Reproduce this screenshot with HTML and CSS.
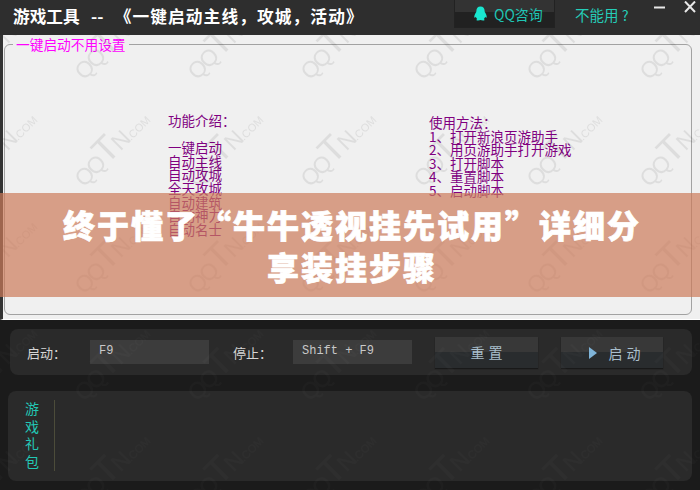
FILE: index.html
```html
<!DOCTYPE html>
<html lang="zh-CN">
<head>
    <meta charset="UTF-8">
    <meta name="viewport" content="width=device-width, initial-scale=1.0">
    <title>游戏工具</title>
    <link rel="stylesheet" href="styles.css">
</head>
<body>
    <header class="titlebar">
        <div class="app-title">游戏工具 -- <span class="title-sub">《一键启动主线，攻城，活动》</span></div>
        <div class="qq-btn">
            <svg class="qq-icon" viewBox="0 0 16 16"><path d="M8 0.5C5 0.5 3.6 2.8 3.6 5.2C3.6 6 3.4 6.4 2.9 7.3C2 8.8 1 11 1.5 12.3C1.9 12.8 2.6 11.9 3 11.4C3.3 12.4 3.8 13.2 4.4 13.8C3.4 14.2 3.2 15.5 5.4 15.5C6.6 15.5 7.4 15.1 8 15C8.6 15.1 9.4 15.5 10.6 15.5C12.8 15.5 12.6 14.2 11.6 13.8C12.2 13.2 12.7 12.4 13 11.4C13.4 11.9 14.1 12.8 14.5 12.3C15 11 14 8.8 13.1 7.3C12.6 6.4 12.4 6 12.4 5.2C12.4 2.8 11 0.5 8 0.5Z"/></svg>
            <span>QQ咨询</span>
        </div>
        <div class="help-link">不能用 ?</div>
        <div class="win-btns">
            <svg class="win-icon" viewBox="0 0 12 12"><path d="M0 6.5H11"/></svg>
            <svg class="win-icon" viewBox="0 0 12 12"><path d="M1 0.5L11 11M11 0.5L1 11"/></svg>
        </div>
    </header>

    <main class="work">
        <fieldset class="settings">
            <legend>一键启动不用设置</legend>
            <div class="info-cols">
                <div class="info-list">
                    <div>功能介绍：</div>
                    <div>&nbsp;</div>
                    <div>一键启动</div>
                    <div>自动主线</div>
                    <div>自动攻城</div>
                    <div>全天攻城</div>
                    <div>自动建筑</div>
                    <div>自动神力</div>
                    <div>自动名士</div>
                </div>
                <div class="info-list usage">
                    <div>使用方法：</div>
                    <div>1、打开新浪页游助手</div>
                    <div>2、用页游助手打开游戏</div>
                    <div>3、打开脚本</div>
                    <div>4、重置脚本</div>
                    <div>5、启动脚本</div>
                </div>
            </div>
        </fieldset>
        <svg class="watermark" width="700" height="285">
            <defs>
                <pattern id="qqtnLight" width="113" height="107" patternUnits="userSpaceOnUse" patternTransform="translate(63 53)">
                    <text class="mark-text" transform="translate(18 100) rotate(-45)">QQ<tspan class="mark-t">T</tspan>N<tspan class="mark-com">.COM</tspan></text>
                </pattern>
            </defs>
            <rect width="700" height="285" fill="url(#qqtnLight)"/>
        </svg>
    </main>

    <section class="lower">
        <div class="controls">
            <label class="key-label">启动：</label>
            <div class="key-input">F9</div>
            <label class="key-label stop">停止：</label>
            <div class="key-input">Shift + F9</div>
            <button class="tool-btn reset">重 置</button>
            <button class="tool-btn start">
                <svg class="play-icon" viewBox="0 0 8 12"><path d="M0 0L8 6L0 12Z"/></svg>
                启 动
            </button>
        </div>
        <div class="gift">
            <div class="gift-title">游<br>戏<br>礼<br>包</div>
            <div class="gift-line"></div>
        </div>
        <svg class="watermark" width="700" height="170">
            <defs>
                <pattern id="qqtnDark" width="113" height="107" patternUnits="userSpaceOnUse" patternTransform="translate(66 -18)">
                    <text class="mark-text dark" transform="translate(18 100) rotate(-45)">QQ<tspan class="mark-t">T</tspan>N<tspan class="mark-com">.COM</tspan></text>
                </pattern>
            </defs>
            <rect width="700" height="170" fill="url(#qqtnDark)"/>
        </svg>
    </section>

    <div class="banner">终于懂了“牛牛透视挂先试用”详细分享装挂步骤</div>
</body>
</html>
```

FILE: styles.css
```css
body {
    margin: 0;
    width: 700px;
    height: 490px;
    overflow: hidden;
    position: relative;
    background-color: #1b1b1b;
    font-family: "Noto Sans CJK SC", sans-serif;
}

/* title bar */
.titlebar {
    display: flex;
    height: 35px;
    background-color: #2e2e2e;
    color: white;
}

.app-title {
    width: 441px;
    padding-left: 13px;
    line-height: 33px;
    font-size: 16.7px;
    font-weight: bold;
    white-space: pre;
    word-spacing: 7.5px;
}

.title-sub {
    letter-spacing: 1.1px;
}

.qq-btn {
    display: flex;
    align-items: center;
    gap: 6px;
    box-sizing: border-box;
    width: 101px;
    height: 28px;
    padding-left: 18px;
    background: linear-gradient(#333 0 45%, #212121 45%);
    border: 1px solid #222;
    border-top: none;
    color: #1fc4b4;
    font-size: 14px;
}

.qq-icon {
    width: 15px;
    height: 15px;
    fill: #19e6cf;
}

.help-link {
    margin-left: 20px;
    line-height: 29px;
    color: #25cdb8;
    font-size: 14.5px;
}

.win-btns {
    display: flex;
    gap: 18px;
    margin-left: 25px;
    padding-top: 1px;
}

.win-icon {
    width: 12px;
    height: 12px;
    fill: none;
    stroke: #e8e8e8;
    stroke-width: 2;
}

/* light work area */
.work {
    position: relative;
    box-sizing: border-box;
    height: 285px;
    padding: 2px 8px 0 1px;
    background-color: #f0f0f0;
    border-left: 3px solid #333;
    border-bottom: 1px solid white;
}

.settings {
    box-sizing: border-box;
    height: 278px;
    margin: 0;
    padding: 0;
    border: 1px solid #a2a2a2;
    border-radius: 6px;
}

.settings legend {
    margin-left: 8px;
    padding: 0 3px;
    color: #ff00ff;
    font-size: 13.7px;
    line-height: 15px;
}

.info-cols {
    display: flex;
    padding: 62px 0 0 163px;
}

.info-list {
    width: 261px;
    color: #800080;
    font-size: 13.5px;
    line-height: 13.6px;
}

.usage {
    padding-top: 2px;
}

.watermark {
    position: absolute;
    left: 0;
    top: 0;
    pointer-events: none;
}

.mark-text {
    fill: rgba(0, 0, 0, 0.08);
    font-family: "Liberation Sans", sans-serif;
    font-size: 23px;
    letter-spacing: -2px;
}

.mark-text.dark {
    fill: rgba(255, 255, 255, 0.02);
}

.mark-t {
    font-size: 36px;
}

.mark-com {
    font-size: 11px;
    letter-spacing: 0;
}

/* dark lower area */
.lower {
    position: relative;
    padding-top: 9px;
}

.controls {
    display: flex;
    align-items: center;
    box-sizing: border-box;
    width: 682px;
    height: 46px;
    margin-left: 10px;
    padding-left: 17px;
    background-color: #2a2a2a;
    border-radius: 8px;
}

.key-label {
    width: 63px;
    color: #d6d6d6;
    font-size: 13px;
}

.key-label.stop {
    width: 60px;
    margin-left: 24px;
}

.key-input {
    box-sizing: border-box;
    width: 119px;
    height: 24px;
    padding-left: 9px;
    background-color: #3c3c3c;
    color: #c8c8c8;
    font-family: "Liberation Mono", monospace;
    font-size: 12px;
    line-height: 23px;
    white-space: pre;
}

.tool-btn {
    display: flex;
    align-items: center;
    justify-content: center;
    gap: 11px;
    width: 103px;
    height: 31px;
    padding: 0;
    border: none;
    background: linear-gradient(#383838 0 50%, #292c2e 50%);
    box-shadow: 0 1px 1px #191919;
    color: #a9bfcc;
    font-family: "Noto Sans CJK SC", sans-serif;
    font-size: 14px;
    word-spacing: 1px;
}

.reset {
    margin: 0 23px;
}

.start {
    width: 102px;
    margin-top: 1px;
    padding-left: 6px;
}

.play-icon {
    width: 8px;
    height: 12px;
    fill: #7fb4d8;
}

.gift {
    display: flex;
    box-sizing: border-box;
    width: 684px;
    height: 90px;
    margin: 16px 0 0 8px;
    padding: 9px 0 0 17px;
    background-color: #2a2a2a;
    border-radius: 8px;
}

.gift-title {
    width: 29px;
    color: #22c7b5;
    font-size: 14px;
    line-height: 17.5px;
}

.gift-line {
    width: 1px;
    height: 71px;
    background-color: #4c4c3a;
}

/* article title strip over the screenshot */
.banner {
    position: absolute;
    left: 0;
    top: 193px;
    box-sizing: border-box;
    width: 700px;
    height: 104px;
    padding: 10px 46px 0 50px;
    background-color: rgba(204, 123, 90, 0.7);
    color: white;
    font-size: 32px;
    font-weight: 900;
    -webkit-text-stroke: 0.7px white;
    letter-spacing: 2px;
    line-height: 42px;
    text-align: center;
}
```
